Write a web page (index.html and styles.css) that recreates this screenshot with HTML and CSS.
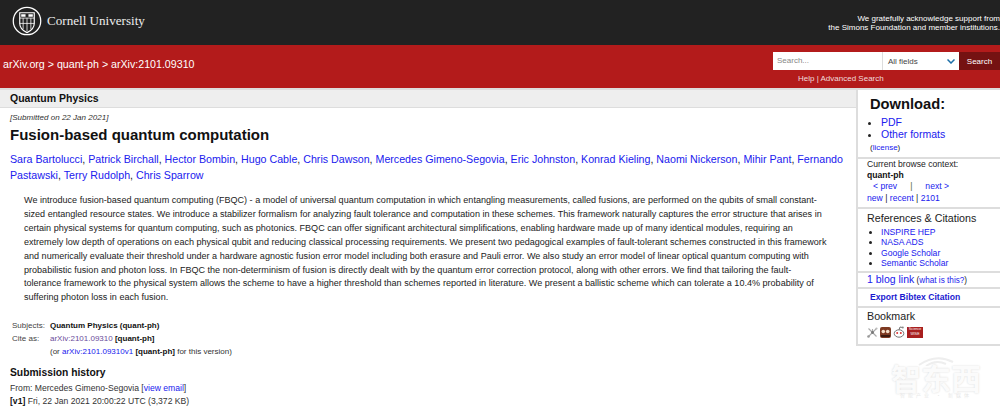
FILE: index.html
```html
<!DOCTYPE html>
<html lang="en">

<head>
    <meta charset="UTF-8">
    <title>Fusion-based quantum computation</title>
    <link rel="stylesheet" href="styles.css">
</head>

<body>
    <!-- Cornell banner -->
    <div class="cu-banner">
        <div class="cu-logo">
            <svg class="seal" width="30" height="30" viewBox="0 0 31 31">
                <circle cx="15.5" cy="15.5" r="14.2" fill="none" stroke="#fff" stroke-width="1.3"/>
                <path d="M8 7 H23 V18 Q23 24 15.5 27.5 Q8 24 8 18 Z" fill="none" stroke="#fff" stroke-width="1.2"/>
                <path d="M8 12.5 H23 M15.5 12.5 V26 M8 18 H23 M11.5 12.5 V24 M19.5 12.5 V24" stroke="#fff" stroke-width=".8"/>
                <path d="M9.5 8.5 H14 V11 H9.5 Z M17 8.5 H21.5 V11 H17 Z" fill="#fff"/>
            </svg>
            <span class="cu-name">Cornell University</span>
        </div>
        <div class="support">We gratefully acknowledge support from<br>the Simons Foundation and member institutions.</div>
    </div>

    <!-- Red bar with breadcrumbs and search -->
    <div class="red-bar">
        <div class="crumbs">arXiv.org &gt; quant-ph &gt; arXiv:2101.09310</div>
        <div class="search-area">
            <div class="search-row">
                <div class="search-input">Search...</div>
                <div class="search-select">All fields
                    <svg width="8" height="5" viewBox="0 0 8 5"><path d="M.5 .5 L4 4 L7.500 .5" fill="none" stroke="#1c6fa8" stroke-width="1.5"/></svg>
                </div>
                <div class="search-btn">Search</div>
            </div>
            <div class="search-links">Help | Advanced Search</div>
        </div>
    </div>

    <div class="page">
        <div class="main">
            <div class="subject-bar">Quantum Physics</div>
            <div class="article">
                <div class="dateline">[Submitted on 22 Jan 2021]</div>
                <h1>Fusion-based quantum computation</h1>
                <div class="authors">
                    <a>Sara Bartolucci</a>
                    <a>Patrick Birchall</a>
                    <a>Hector Bombin</a>
                    <a>Hugo Cable</a>
                    <a>Chris Dawson</a>
                    <a>Mercedes Gimeno-Segovia</a>
                    <a>Eric Johnston</a>
                    <a>Konrad Kieling</a>
                    <a>Naomi Nickerson</a>
                    <a>Mihir Pant</a>
                    <a>Fernando Pastawski</a>
                    <a>Terry Rudolph</a>
                    <a>Chris Sparrow</a>
                </div>
                <p class="abstract">We introduce fusion-based quantum computing (FBQC) - a model of universal quantum computation in which entangling measurements, called fusions, are performed on the qubits of small constant-sized entangled resource states. We introduce a stabilizer formalism for analyzing fault tolerance and computation in these schemes. This framework naturally captures the error structure that arises in certain physical systems for quantum computing, such as photonics. FBQC can offer significant architectural simplifications, enabling hardware made up of many identical modules, requiring an extremely low depth of operations on each physical qubit and reducing classical processing requirements. We present two pedagogical examples of fault-tolerant schemes constructed in this framework and numerically evaluate their threshold under a hardware agnostic fusion error model including both erasure and Pauli error. We also study an error model of linear optical quantum computing with probabilistic fusion and photon loss. In FBQC the non-determinism of fusion is directly dealt with by the quantum error correction protocol, along with other errors. We find that tailoring the fault-<br>tolerance framework to the physical system allows the scheme to have a higher threshold than schemes reported in literature. We present a ballistic scheme which can tolerate a 10.4% probability of suffering photon loss in each fusion.</p>
                <div class="meta">
                    <div class="meta-label">Subjects:</div>
                    <div><b>Quantum Physics (quant-ph)</b></div>
                    <div class="meta-label">Cite as:</div>
                    <div><a class="visited">arXiv:2101.09310</a> <b>[quant-ph]</b></div>
                    <div></div>
                    <div>(or <a>arXiv:2101.09310v1</a> <b>[quant-ph]</b> for this version)</div>
                </div>
                <h2>Submission history</h2>
                <div class="history">From: Mercedes Gimeno-Segovia [<a>view email</a>]<br><b>[v1]</b> Fri, 22 Jan 2021 20:00:22 UTC (3,372 KB)</div>
            </div>
        </div>

        <div class="side">
            <div class="side-box download">
                <h3>Download:</h3>
                <ul>
                    <li><a>PDF</a></li>
                    <li><a>Other formats</a></li>
                </ul>
                <div class="license">(<a>license</a>)</div>
            </div>
            <div class="side-box context">
                <div>Current browse context:</div>
                <b>quant-ph</b>
                <div class="prevnext"><a>&lt;&nbsp;prev</a><span>|</span><a>next&nbsp;&gt;</a></div>
                <div class="browse-links"><a>new</a> | <a>recent</a> | <a>2101</a></div>
            </div>
            <div class="side-box refs">
                <h4>References &amp; Citations</h4>
                <ul>
                    <li><a>INSPIRE HEP</a></li>
                    <li><a>NASA ADS</a></li>
                    <li><a>Google Scholar</a></li>
                    <li><a>Semantic Scholar</a></li>
                </ul>
            </div>
            <div class="side-box blog"><a class="big">1 blog link</a> (<a>what is this?</a>)</div>
            <div class="side-box export"><a>Export Bibtex Citation</a></div>
            <div class="side-box bookmark">
                <h4>Bookmark</h4>
                <div class="icons">
                    <svg width="11" height="11" viewBox="0 0 11 11"><path d="M1.500 1.500 L9.500 9.500 M9.500 1.500 L1.500 9.500 M5.500 2 V5.500" stroke="#aaa" stroke-width="1.100"/><circle cx="5.500" cy="5.500" r="1.400" fill="#777"/><circle cx="1.500" cy="9.500" r="1.300" fill="#999"/><circle cx="9.500" cy="1.500" r="1.100" fill="#bbb"/></svg>
                    <svg width="11" height="11" viewBox="0 0 11 11"><rect width="11" height="11" rx="2" fill="#7e3a22"/><circle cx="3.300" cy="4.500" r="1.800" fill="#f3ddc8"/><circle cx="7.700" cy="4.500" r="1.800" fill="#f3ddc8"/><rect x="1" y="8" width="9" height="2" fill="#3c1a10"/></svg>
                    <svg width="12" height="12" viewBox="0 0 12 12"><ellipse cx="6" cy="7.500" rx="4.800" ry="3.700" fill="#fff" stroke="#666" stroke-width=".9"/><circle cx="4.200" cy="7" r="1" fill="#d33"/><circle cx="7.800" cy="7" r="1" fill="#d33"/><path d="M6 3.800 L7 1 L9.500 1.500" fill="none" stroke="#666" stroke-width=".9"/><circle cx="9.800" cy="1.600" r="1" fill="#888"/></svg>
                    <div class="sciencewise">Science<br>WISE</div>
                </div>
            </div>
        </div>
    </div>

    <!-- Watermark sits over the page corner -->
    <div class="watermark">
        <svg width="40" height="10" viewBox="0 0 40 10"><path d="M3 9 Q20 -3 37 6 M10 10 Q20 3 30 8" fill="none" stroke="#eee" stroke-width="2"/></svg>
        <div class="wm-name">智东西</div>
        <div class="wm-tag">智能产业 · 新媒体</div>
    </div>
</body>

</html>
```

FILE: styles.css
```css
body {
    margin: 0;
    font-family: "Liberation Sans", Arial, sans-serif;
    background-color: #fff;
    color: #222;
    height: 418px;
    overflow: hidden;
}

a {
    color: #2020ee;
}

.cu-banner {
    height: 45px;
    background-color: #222;
    color: #fff;
    display: flex;
    justify-content: space-between;
    align-items: center;
    padding-left: 12px;
}

.cu-logo {
    display: flex;
    align-items: center;
    gap: 5px;
    margin-top: -3px;
}

.cu-name {
    font-family: "Liberation Serif", serif;
    font-size: 13.1px;
    color: #eee;
}

.support {
    font-size: 8px;
    line-height: 9px;
    text-align: right;
    margin-top: 1px;
    white-space: nowrap;
}

.red-bar {
    height: 43px;
    background-color: #b31b1b;
    color: #fff;
    display: flex;
    justify-content: space-between;
    padding-left: 3px;
}

.crumbs {
    font-size: 10.65px;
    padding-top: 13px;
}

.search-area {
    padding-top: 7px;
    font-size: 8px;
}

.search-row {
    display: flex;
    height: 18px;
}

.search-input {
    width: 110px;
    background: #fff;
    color: #888;
    padding: 4px 4px;
    box-sizing: border-box;
    border-right: 1px solid #ddd;
}

.search-select {
    width: 76px;
    background: #fff;
    color: #444;
    padding: 4px;
    padding-left: 5px;
    box-sizing: border-box;
    display: flex;
    justify-content: space-between;
    align-items: center;
}

.search-btn {
    width: 41px;
    background: #751212;
    padding-top: 5px;
    text-align: center;
    box-sizing: border-box;
}

.search-links {
    padding: 4px 0 0 25px;
    color: #f0dcdc;
}

.page {
    display: flex;
    align-items: flex-start;
    border-top: 2px solid #ddd;
}

.main {
    width: 856px;
    flex: none;
}

.subject-bar {
    background: #eee;
    height: 17px;
    line-height: 17px;
    padding-left: 10px;
    font-size: 10.5px;
    font-weight: bold;
    color: #111;
    border-bottom: 1px solid #ddd;
}

.article {
    padding: 0 10px;
}

.dateline {
    font-size: 8.05px;
    font-style: italic;
    padding-top: 5px;
    color: #333;
}

h1 {
    font-size: 15px;
    margin: 2px 0 0;
    color: #111;
    line-height: 22px;
}

.authors {
    font-size: 10.66px;
    line-height: 16px;
    margin-top: 5px;
}

/* commas stay dark between the blue names */
.authors a::after {
    content: ",";
    color: #222;
}

.authors a:last-child::after {
    content: none;
}

.abstract {
    font-size: 9.05px;
    line-height: 13.9px;
    margin: 11px 14px 0 14px;
    color: #222;
}

.meta {
    display: grid;
    grid-template-columns: 38px 1fr;
    font-size: 8px;
    line-height: 12.7px;
    margin: 15px 0 0 2px;
    color: #333;
}

.meta b {
    color: #111;
}

.meta-label {
    color: #444;
}

.visited {
    color: #6a4a9a;
}

h2 {
    font-size: 10.3px;
    margin: 8px 0 0;
    line-height: 14px;
    color: #111;
}

.history {
    font-size: 8.6px;
    line-height: 13px;
    margin-top: 2px;
    color: #333;
}

.history b {
    color: #111;
}

.side {
    flex: 1;
    border-left: 2px solid #ddd;
    font-size: 8.6px;
    color: #222;
}

.side-box {
    border-bottom: 2px solid #ddd;
    padding-left: 9px;
}

.side ul {
    margin: 0;
    padding-left: 14px;
}

.download {
    height: 67px;
    padding-left: 12px;
}

.download h3 {
    font-size: 14.7px;
    margin: 0;
    padding-top: 5px;
    line-height: 18px;
    color: #111;
}

.download ul {
    font-size: 10.5px;
    line-height: 12px;
    padding-left: 11px;
    margin-top: 3px;
}

.license {
    font-size: 8px;
    margin-top: 3px;
}

.context {
    height: 48px;
    line-height: 11px;
}

.context b {
    display: block;
    line-height: 10px;
    color: #111;
}

.prevnext {
    display: flex;
    gap: 13px;
    padding-left: 6px;
    margin-top: 1px;
}

.prevnext span {
    color: #556b2f;
}

.browse-links {
    margin-top: 1px;
}

.refs {
    height: 62px;
}

.refs h4,
.bookmark h4 {
    font-size: 10.7px;
    font-weight: normal;
    margin: 0;
    line-height: 14px;
}

.refs h4 {
    padding-top: 2px;
}

.bookmark h4 {
    padding-top: 1px;
}

.refs ul {
    line-height: 10.3px;
    margin-top: 2px;
}

.blog {
    height: 14px;
    line-height: 13px;
    font-size: 8.2px;
}

.big {
    font-size: 10.5px;
}

.export {
    height: 17px;
    line-height: 16px;
    font-size: 8.6px;
    font-weight: bold;
    padding-left: 12px;
}

.export a {
    color: #1a1ad0;
}

.bookmark {
    height: 36px;
}

.icons {
    display: flex;
    gap: 2px;
    align-items: center;
    margin-top: 3px;
}

.sciencewise {
    width: 16px;
    height: 11px;
    background: #a81e1e;
    color: #fff;
    font-size: 3.5px;
    line-height: 5px;
    text-align: center;
}

.watermark {
    position: absolute;
    left: 889px;
    top: 356px;
    width: 94px;
    text-align: center;
}

.watermark svg {
    display: block;
    margin: 0 auto -4px;
}

.wm-name {
    font-family: "Noto Sans CJK SC", sans-serif;
    font-size: 30px;
    font-weight: bold;
    line-height: 30px;
    color: #fbfbfb;
    text-shadow: 0 0 2px #d8d8d8;
}

.wm-tag {
    font-family: "Noto Sans CJK SC", sans-serif;
    font-size: 5px;
    line-height: 6px;
    letter-spacing: 3px;
    white-space: nowrap;
    color: #e8e8e8;
}
```
